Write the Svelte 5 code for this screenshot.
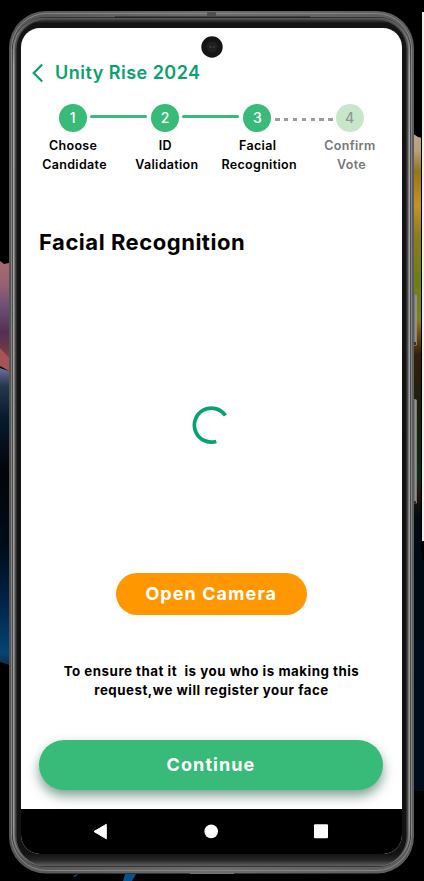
<script>
  const steps = [
    { n: 1, a: 'Choose', b: 'Candidate', link: 'solid' },
    { n: 2, a: 'ID', b: 'Validation', link: 'solid' },
    { n: 3, a: 'Facial', b: 'Recognition', link: 'dashed' },
    { n: 4, a: 'Confirm', b: 'Vote', link: '' }
  ];
</script>

<div class="stage">
  <svg class="backdrop" width="424" height="881" viewBox="0 0 424 881" aria-hidden="true">
    <defs>
      <linearGradient id="dusk" x1="0" y1="0" x2="0" y2="1">
        <stop offset="0" stop-color="#a86a70" />
        <stop offset=".2" stop-color="#9a6270" />
        <stop offset=".4" stop-color="#705078" />
        <stop offset=".65" stop-color="#542f53" />
        <stop offset=".8" stop-color="#6e3946" />
        <stop offset="1" stop-color="#a65458" />
      </linearGradient>
      <linearGradient id="night" x1="0" y1="0" x2="0" y2="1">
        <stop offset="0" stop-color="#6f709b" />
        <stop offset=".06" stop-color="#27364f" />
        <stop offset=".17" stop-color="#071a2e" />
        <stop offset=".35" stop-color="#020409" />
        <stop offset=".6" stop-color="#000c19" />
        <stop offset=".8" stop-color="#00254a" />
        <stop offset=".96" stop-color="#064474" />
        <stop offset="1" stop-color="#142b42" />
      </linearGradient>
      <linearGradient id="leaf" x1="0" y1="0" x2="0" y2="1">
        <stop offset="0" stop-color="#b5a68a" />
        <stop offset=".04" stop-color="#b8a27b" />
        <stop offset=".09" stop-color="#97751b" />
        <stop offset=".17" stop-color="#c69228" />
        <stop offset=".24" stop-color="#8d7b20" />
        <stop offset=".34" stop-color="#717d16" />
        <stop offset=".44" stop-color="#80801b" />
        <stop offset=".47" stop-color="#78500e" />
        <stop offset=".52" stop-color="#33200b" />
        <stop offset=".65" stop-color="#1b2109" />
        <stop offset=".81" stop-color="#102b17" />
        <stop offset=".84" stop-color="#26170d" />
        <stop offset=".9" stop-color="#020b10" />
        <stop offset="1" stop-color="#000a12" />
      </linearGradient>
      <linearGradient id="rim" x1="0" y1="0" x2="1" y2="0">
        <stop offset="0" stop-color="#555" />
        <stop offset=".5" stop-color="#6c6c6c" />
        <stop offset="1" stop-color="#5c5c5c" />
      </linearGradient>
      <linearGradient id="bezel" x1="0" y1="20" x2="0" y2="866" gradientUnits="userSpaceOnUse">
        <stop offset="0" stop-color="#3a3a3a" />
        <stop offset=".004" stop-color="#141414" />
        <stop offset=".986" stop-color="#131313" />
        <stop offset=".993" stop-color="#262626" />
        <stop offset="1" stop-color="#606060" />
      </linearGradient>
      <linearGradient id="band" x1="0" y1="17" x2="0" y2="866" gradientUnits="userSpaceOnUse">
        <stop offset="0" stop-color="#555" />
        <stop offset=".06" stop-color="#aaa" />
        <stop offset=".95" stop-color="#999" />
        <stop offset="1" stop-color="#666" />
      </linearGradient>
    </defs>
    <rect width="424" height="881" fill="#000" />
    <path d="M0 261 4 264 9 263V371L0 348Z" fill="url(#dusk)" />
    <path d="M0 348 9 358V371L0 366Z" fill="#a65458" />
    <path d="M0 368 9 371V665L0 662Z" fill="url(#night)" />
    <path d="M412 133 418 137 422 138V560H412Z" fill="url(#leaf)" />
    <path d="M412 560H424V640H412Z" fill="#000a12" />
    <path d="M412 640H424V791H412Z" fill="#000c1c" />
    <path d="M125 874H136L132 881H123Z" fill="#07518b" />
    <path d="M73 876 79 873 75 877Z" fill="#07518b" />
    <rect x="422" y="12" width="2" height="529" fill="#f1eeec" />
    <rect x="421" y="133" width="1" height="420" fill="#000" />

    <rect x="412" y="294" width="4.5" height="52" rx="1" fill="#767676" />
    <rect x="415.5" y="295" width="1" height="50" fill="#aaa" />
    <rect x="413" y="342" width="3" height="3" fill="#333" />
    <rect x="412" y="399" width="4.5" height="105" rx="1" fill="#767676" />
    <rect x="415.5" y="400" width="1" height="103" fill="#aaa" />
    <rect x="413" y="501" width="3" height="3" fill="#333" />
    <rect x="190" y="872" width="44" height="2" fill="#777" />

    <rect x="9" y="11" width="405" height="862.5" rx="37" fill="url(#rim)" />
    <rect x="11.5" y="13.5" width="400" height="857" rx="35" fill="none" stroke="#858585" stroke-width="1" />
    <rect x="12.5" y="17.5" width="398" height="849" rx="33" fill="#666" stroke="#252525" stroke-width="1" />
    <rect x="13.5" y="18.5" width="396" height="847" rx="31" fill="none" stroke="url(#band)" stroke-width="1.6" />
    <rect x="15" y="19" width="393" height="846.5" rx="30" fill="#484848" />
    <rect x="16.5" y="20" width="390" height="845.5" rx="29" fill="url(#bezel)" />
    <rect x="207" y="12" width="9" height="4" fill="#505050" />
    <rect x="115" y="16.5" width="195" height="1.5" fill="#222" />
  </svg>

  <main class="screen">
    <div class="camera">
      <svg width="22" height="22" viewBox="0 0 22 22">
        <circle cx="11" cy="11" r="10.7" fill="#151515" />
        <circle cx="11" cy="11" r="5.5" fill="#202020" />
        <circle cx="9.5" cy="11" r="1" fill="#454238" />
        <circle cx="13" cy="11" r="1" fill="#4b352d" />
      </svg>
    </div>
    <header>
      <svg width="12" height="20" viewBox="0 0 12 20">
        <path d="M10.2 1.5 1.7 10l8.5 8.5" fill="none" stroke="#08a26d" stroke-width="2.2" />
      </svg>
      <span>Unity Rise 2024</span>
    </header>

    <ol class="steps">
      {#each steps as s (s.n)}
        <li class:pending={s.n === 4}>
          <div class="track">
            <b>{s.n}</b>
            {#if s.link}<i class={s.link}></i>{/if}
          </div>
          <div class="label">
            <div class="first">{s.a}</div>
            <div class="second">{s.b}</div>
          </div>
        </li>
      {/each}
    </ol>

    <h1>Facial Recognition</h1>

    <div class="loader">
      <svg width="38" height="38" viewBox="0 0 38 38">
        <path d="M33.4 9.5A17 17 0 1 0 24.3 35.4" fill="none" stroke="#08a26d" stroke-width="3.7" />
      </svg>
    </div>

    <button class="open">Open Camera</button>
    <p>To ensure that it&nbsp; is you who is making this<br />request,we will register your face</p>
    <button class="continue">Continue</button>

    <nav>
      <svg width="381" height="45" viewBox="0 0 381 45">
        <path d="M73 22.5 85.3 15.3V29.8Z" fill="#fff" stroke="#fff" stroke-width="1" stroke-linejoin="round" />
        <circle cx="190.2" cy="22.4" r="6.8" fill="#fff" />
        <rect x="293" y="15.3" width="14" height="14" rx="1" fill="#fff" />
      </svg>
    </nav>
  </main>
</div>

<style>
  :global(body) {
    background: #000;
    overflow: hidden;
  }
  .stage {
    position: relative;
    box-sizing: border-box;
    width: 424px;
    height: 881px;
    padding: 28px 22px 27px 21px;
    font-family: Inter, 'Liberation Sans', sans-serif;
  }
  .backdrop {
    position: absolute;
    inset: 0;
  }
  svg {
    display: block;
  }
  .screen {
    position: relative;
    display: flex;
    flex-direction: column;
    width: 381px;
    height: 826px;
    overflow: hidden;
    border-radius: 19px;
    background: #fff;
    color: #000;
  }
  .camera {
    display: flex;
    justify-content: center;
    height: 22px;
    padding-top: 8px;
  }
  header {
    display: flex;
    align-items: center;
    gap: 11px;
    height: 24px;
    margin: 2.5px 0 0 11px;
    color: #08a26d;
    font-size: 18px;
    font-weight: 600;
    letter-spacing: 0.48px;
    white-space: nowrap;
  }
  .steps {
    display: flex;
    margin: 19.8px 0 0 5.7px;
    padding: 0;
    list-style: none;
  }
  li {
    flex: 0 0 92.3px;
    width: 92.3px;
  }
  .track {
    display: flex;
    align-items: center;
    height: 28px;
    padding-left: 32px;
  }
  b {
    flex: 0 0 28px;
    height: 28px;
    border-radius: 50%;
    background: #38bb78;
    color: #fff;
    font-size: 14px;
    font-weight: 500;
    line-height: 28px;
    text-align: center;
  }
  .solid {
    flex: 0 0 57px;
    height: 3px;
    margin: -3px 0 0 3.5px;
    border-radius: 2px;
    background: #38bb78;
  }
  .dashed {
    flex: 0 0 58px;
    height: 3px;
    margin: 2px 0 0 4px;
    background: repeating-linear-gradient(90deg, #9c9c9c 0 4.5px, transparent 4.5px 8.9px);
  }
  .label {
    margin-top: 4px;
    font-size: 12.5px;
    font-weight: 600;
    line-height: 19px;
    letter-spacing: 0.32px;
    text-align: center;
    white-space: nowrap;
  }
  .first {
    padding-left: 0.5px;
  }
  .second {
    padding-left: 3.5px;
  }
  .pending b {
    background: #c8e6c9;
    color: #8f9a90;
  }
  .pending .label {
    color: #777;
  }
  h1 {
    margin: 53.7px 0 0 18px;
    font-size: 22px;
    font-weight: 700;
    line-height: 28px;
    letter-spacing: 0.53px;
    white-space: nowrap;
  }
  .loader {
    display: flex;
    padding: 150px 0 0 171px;
  }
  button {
    border: 0;
    padding: 0;
    color: #fff;
    font-family: inherit;
    font-weight: 700;
    letter-spacing: 1.08px;
    white-space: nowrap;
  }
  .open {
    flex: none;
    width: 190.5px;
    height: 42px;
    margin: 129px 0 0 95px;
    border-radius: 21px;
    background: #ff9800;
    font-size: 18px;
  }
  p {
    margin: 47px 0 0;
    font-size: 13.3px;
    font-weight: 700;
    line-height: 19.5px;
    letter-spacing: 0.52px;
    text-align: center;
    white-space: nowrap;
  }
  .continue {
    flex: none;
    width: 344px;
    height: 50.5px;
    margin: auto 0 19px 18px;
    border-radius: 25.5px;
    background: #38bb78;
    box-shadow: 0 6px 12px rgba(0, 70, 35, 0.5);
    font-size: 18px;
  }
  nav {
    position: relative;
    flex: none;
    height: 45px;
    background: #000;
  }
</style>
